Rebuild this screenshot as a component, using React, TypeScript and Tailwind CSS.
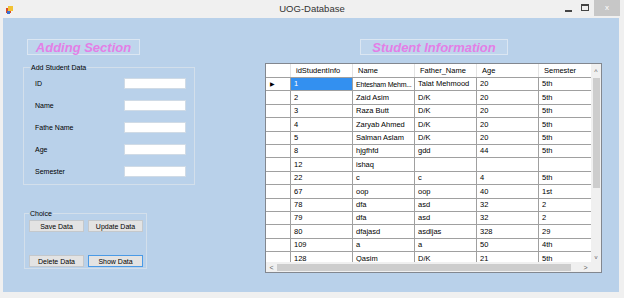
import React from 'react';

const font = { fontFamily: '"Liberation Sans", Arial, sans-serif' };

const fields = ['ID', 'Name', 'Fathe Name', 'Age', 'Semester'];

const columns = ['idStudentInfo', 'Name', 'Father_Name', 'Age', 'Semester'];

const rows = [
    ['1', 'Ehtesham Mehm...', 'Talat Mehmood', '20', '5th'],
    ['2', 'Zaid Asim', 'D/K', '20', '5th'],
    ['3', 'Raza Butt', 'D/K', '20', '5th'],
    ['4', 'Zaryab Ahmed', 'D/K', '20', '5th'],
    ['5', 'Salman Aslam', 'D/K', '20', '5th'],
    ['8', 'hjgfhfd', 'gdd', '44', '5th'],
    ['12', 'ishaq', '', '', ''],
    ['22', 'c', 'c', '4', '5th'],
    ['67', 'oop', 'oop', '40', '1st'],
    ['78', 'dfa', 'asd', '32', '2'],
    ['79', 'dfa', 'asd', '32', '2'],
    ['80', 'dfajasd', 'asdljas', '328', '29'],
    ['109', 'a', 'a', '50', '4th'],
    ['128', 'Qasim', 'D/K', '21', '5th'],
];

const Caption = ({ text, className }: { text: string; className: string }) => (
    <div className={`h-[16px] flex items-center justify-center border border-[#dbe6f2] bg-[#bfd5ec] ${className}`}>
        <span className="text-[13px] leading-none font-bold italic text-[#e37fe6]" style={font}>{text}</span>
    </div>
);

const Button = ({ label, focused }: { label: string; focused?: boolean }) => (
    <button
        className={`w-[55px] h-[12px] flex items-center justify-center bg-[#e3e3e3] border text-[7px] leading-none text-black ${focused ? 'border-[#4a9ae6]' : 'border-[#c4c8cc]'}`}
        style={font}
    >
        {label}
    </button>
);

const DataGrid = () => (
    <div className="w-[337px] h-[210px] border border-[#82878f] bg-white flex flex-col mt-[8px]" style={font}>
        <div className="flex flex-1 min-h-0">
            <div className="flex-1 overflow-hidden">
                {/* Header */}
                <div className="flex h-[14px] border-b border-[#a0a0a0]">
                    <div className="w-[25px] shrink-0 border-r border-[#e3e3e3]" />
                    {columns.map((c) => (
                        <div key={c} className="w-[62px] shrink-0 border-r border-[#e3e3e3] pl-[5px] flex items-center text-[7.5px] leading-none text-black">
                            {c}
                        </div>
                    ))}
                </div>
                {/* Rows */}
                {rows.map((r, i) => (
                    <div key={i} className="flex h-[13.4px] border-b border-[#a0a0a0]">
                        <div className="w-[25px] shrink-0 border-r border-[#a0a0a0] flex items-center pl-[4px]">
                            {i === 0 && <span className="text-[6px] leading-none text-black">▶</span>}
                        </div>
                        {r.map((v, j) => (
                            <div
                                key={j}
                                className={`w-[62px] shrink-0 border-r border-[#a0a0a0] pl-[3px] flex items-center leading-none whitespace-nowrap overflow-hidden ${v.length > 14 ? 'text-[7px] tracking-[-0.2px]' : 'text-[7.5px]'} ${i === 0 && j === 0 ? 'bg-[#3390f0] text-white' : 'text-black'}`}
                            >
                                {v}
                            </div>
                        ))}
                    </div>
                ))}
            </div>
            {/* Vertical scrollbar */}
            <div className="w-[10px] bg-[#f0f0f0] flex flex-col items-center">
                <div className="h-[14px] flex items-center justify-center text-[7px] leading-none text-[#606060]">^</div>
                <div className="w-[7px] h-[110px] bg-[#cdcdcd]" />
                <div className="flex-1" />
                <div className="h-[10px] flex items-center justify-center text-[6px] leading-none text-[#606060]">v</div>
            </div>
        </div>
        {/* Horizontal scrollbar */}
        <div className="h-[10px] flex bg-[#f0f0f0]">
            <div className="flex-1 flex items-center">
                <span className="w-[11px] text-center text-[7px] leading-none text-[#606060]">&lt;</span>
                <div className="w-[294px] h-[7px] bg-[#cdcdcd]" />
                <div className="flex-1" />
                <span className="w-[11px] text-center text-[7px] leading-none text-[#606060]">&gt;</span>
            </div>
            <div className="w-[10px] bg-[#f0f0f0]" />
        </div>
    </div>
);

const App = () => {
    return (
        <div className="w-[624px] h-[298px] bg-[#f0f0f0] flex flex-col overflow-hidden" style={font}>
            {/* Title bar */}
            <div className="h-[18px] grid grid-cols-[1fr_auto_1fr] items-center shrink-0">
                <div className="pl-[5px] flex items-center">
                    <svg width="9" height="9" viewBox="0 0 9 9">
                        <rect x="1" y="3" width="5" height="5" fill="#d94b2b" />
                        <rect x="3" y="1" width="5" height="5" fill="#f2c233" />
                        <rect x="2" y="6" width="3" height="3" fill="#3b6fd1" />
                    </svg>
                </div>
                <div className="text-[9.5px] leading-none text-[#333]">UOG-Database</div>
                <div className="flex items-start justify-end h-full">
                    <div className="w-[7px] h-[2px] bg-[#444] mt-[10px] mr-[9px]" />
                    <div className="w-[8px] h-[7px] border border-[#444] border-t-2 mt-[4px] mr-[5px]" />
                    <div className="w-[26px] h-[16px] bg-[#c7c7c7] flex items-center justify-center text-[8px] text-white mr-[4px]">x</div>
                </div>
            </div>

            {/* Client area */}
            <div className="flex-1 ml-[3px] mr-[5px] mb-[6px] bg-[#b9d1ea] flex pl-[20px] pt-[21px]">
                {/* Left column */}
                <div className="w-[172px] flex flex-col">
                    <Caption text="Adding Section" className="w-[113px] ml-[4px]" />

                    <fieldset className="mt-[8px] border border-[#d3dfeb] pl-[11px] pr-[8px] pb-[2px]">
                        <legend className="ml-[-5px] px-[1px] text-[7px] leading-[9px] text-black">Add Student Data</legend>
                        {fields.map((f) => (
                            <div key={f} className="h-[22px] flex items-center justify-between">
                                <span className="text-[7px] leading-none text-black">{f}</span>
                                <div className="w-[62px] h-[11px] bg-white border border-[#d0dbe6]" />
                            </div>
                        ))}
                    </fieldset>

                    <fieldset className="mt-[24px] ml-[1px] w-[123px] border border-[#d3dfeb] pl-[4px] pb-[1px]">
                        <legend className="px-[1px] text-[7px] leading-[9px] text-black">Choice</legend>
                        <div className="flex gap-[4px] mt-[2px]">
                            <Button label="Save Data" />
                            <Button label="Update Data" />
                        </div>
                        <div className="flex gap-[4px] mt-[23px]">
                            <Button label="Delete Data" />
                            <Button label="Show Data" focused />
                        </div>
                    </fieldset>
                </div>

                {/* Right column */}
                <div className="ml-[70px] flex flex-col">
                    <Caption text="Student Information" className="w-[148px] ml-[95px]" />
                    <DataGrid />
                </div>
            </div>
        </div>
    );
};

export default App;
